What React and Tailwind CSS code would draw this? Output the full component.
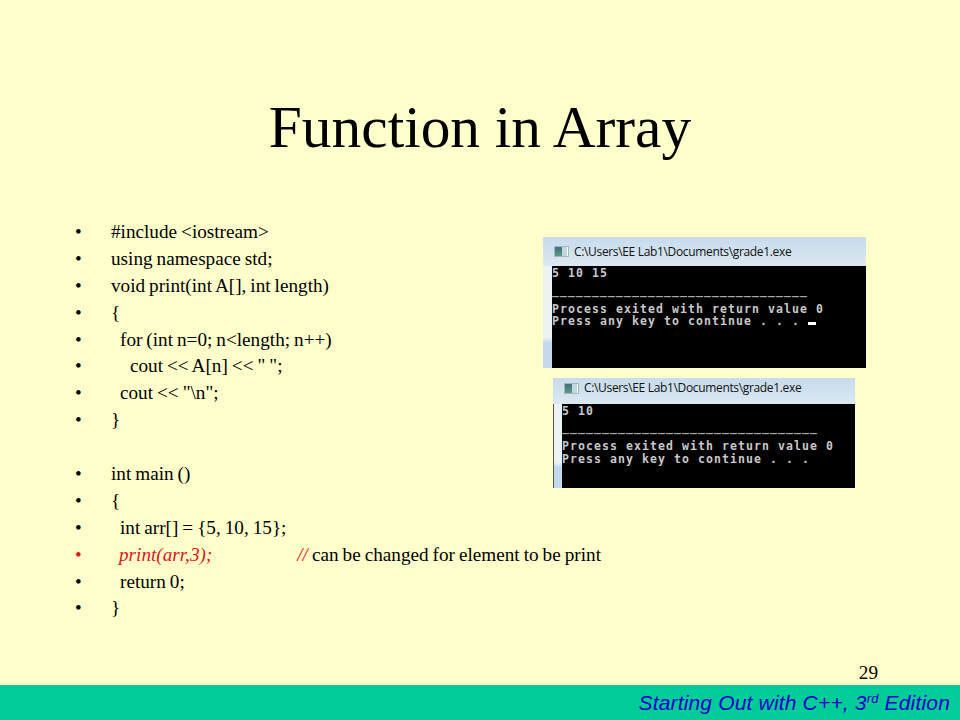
const lines = [
  { text: "#include <iostream>" },
  { text: "using namespace std;" },
  { text: "void print(int A[], int length)" },
  { text: "{" },
  { text: "for (int n=0; n<length; n++)", indent: "pl-[9px]" },
  { text: "cout << A[n] << \" \";", indent: "pl-[19px]" },
  { text: "cout << \"\\n\";", indent: "pl-[9px]" },
  { text: "}" },
  { blank: true },
  { text: "int main ()" },
  { text: "{" },
  { text: "int arr[] = {5, 10, 15};", indent: "pl-[9px]" },
  { call: true },
  { text: "return 0;", indent: "pl-[9px]" },
  { text: "}" },
];

const Console = ({ output, cursor, className, barClass, gutterClass, dashClass, afterClass }) => (
  <div className={`flex flex-col ${className}`}>
    <div className={`flex items-center gap-[5px] bg-gradient-to-b from-[#c6dcec] to-[#dbe8f1] pl-[11px] font-['Open_Sans',sans-serif] text-[12px] tracking-[-0.34px] text-[#111] ${barClass}`}>
      <span className="flex h-[11px] w-[15px] border border-[#a9b4ba] bg-white">
        <span className="w-[7px] bg-gradient-to-b from-[#3f6f80] to-[#5a9a86]" />
        <span className="w-[5px] bg-[#c3d6e2]" />
      </span>
      C:\Users\EE Lab1\Documents\grade1.exe
    </div>
    <div className="flex min-h-0 flex-1">
      <div className={`w-[9px] bg-gradient-to-b from-[#edf3f0] from-70% to-[#c5d9ee] to-75% ${gutterClass}`} />
      <div className="flex-1 whitespace-pre bg-black pt-[1px] font-['DejaVu_Sans_Mono',monospace] text-[11.5px] font-bold leading-[12.5px] tracking-[1.08px] text-[#c8c8c8]">
        <div>{output}</div>
        <div className={`text-[#a8a8a8] ${dashClass}`}>{"________________________________"}</div>
        <div className={afterClass}>Process exited with return value 0</div>
        <div>
          {"Press any key to continue . . . "}
          {cursor && <span className="inline-block h-[3px] w-[8px] bg-white" />}
        </div>
      </div>
    </div>
  </div>
);

export default function App() {
  return (
    <div className="flex h-[720px] w-[960px] flex-col overflow-hidden bg-[#ffffcc] font-['Liberation_Serif',serif] text-black">
      <h1 className="mt-[88px] h-[78px] text-center text-[59.4px] leading-[78px]">
        Function in Array
      </h1>
      <div className="mt-[53px] flex min-h-0 flex-1">
        <ul className="w-[543px] shrink-0 pl-[75px] text-[19.2px] leading-[26.9px] [word-spacing:-0.8px]">
          {lines.map((line, i) => (
            <li key={i} className={`flex h-[26.9px] ${line.call ? "text-[#e01515]" : ""}`}>
              {!line.blank && <span className="w-[36px] shrink-0">•</span>}
              {line.call ? (
                <span className="whitespace-pre pl-[8px] text-black">
                  <span className="text-[#e01515] italic">print(arr,3);</span>
                  <span className="ml-[85px] text-[#e01515] italic">//</span>
                  {" can be changed for element to be print"}
                </span>
              ) : (
                <span className={`whitespace-pre ${line.indent || ""}`}>{line.text}</span>
              )}
            </li>
          ))}
        </ul>
        <div className="flex w-[323px] flex-col">
          <Console
            className="mt-[18px] h-[131px] w-[323px]"
            barClass="h-[29px]"
            gutterClass=""
            dashClass="mt-[4.5px]"
            afterClass="mt-[6px]"
            output="5 10 15"
            cursor
          />
          <Console
            className="mt-[10px] ml-[10px] h-[110px] w-[302px]"
            barClass="h-[26px] pb-[6px]"
            gutterClass="border-l border-[#555]"
            dashClass="mt-[3px]"
            afterClass="mt-[7px]"
            output="5 10"
          />
        </div>
      </div>
      <div className="pr-[82px] text-right text-[19.2px] leading-[20px]">29</div>
      <div className="mt-[2px] flex h-[35px] items-center justify-end bg-[#00cc99] pr-[10px] font-['Liberation_Sans',sans-serif] text-[21px] tracking-[0.17px] text-[#0000cc] italic">
        <span>
          Starting Out with C++, 3<sup className="text-[13px]">rd</sup> Edition
        </span>
      </div>
    </div>
  );
}
